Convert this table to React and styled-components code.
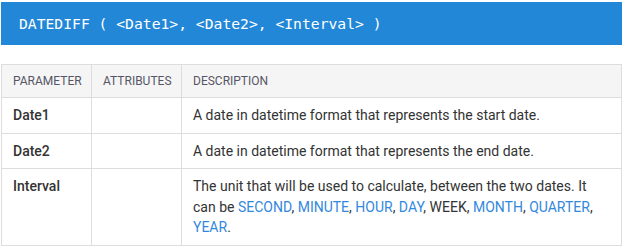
import React from "react"
import styled, { createGlobalStyle } from "styled-components"

const GlobalStyle = createGlobalStyle`
    body {
        margin: 0;
        background: #ffffff;
        font-family: Roboto, "Liberation Sans", sans-serif;
    }
`

const Page = styled.div`
    padding: 2px 3px 0 1px;
    width: 621px;
`

const Syntax = styled.div`
    height: 43px;
    display: flex;
    align-items: center;
    padding-left: 18px;
    background-color: #2387d8;
    color: #ffffff;
    font-family: "DejaVu Sans Mono", "Liberation Mono", monospace;
    font-size: 14.7px;
    white-space: pre;
`

const Table = styled.table`
    margin-top: 19px;
    width: 621px;
    border-collapse: collapse;
    table-layout: fixed;
    color: #333333;
`

const Col = styled.col`
    width: ${p => p.w || "auto"};
`

const HeadCell = styled.th`
    padding: 7px 11px;
    border: 1px solid #dddddd;
    background-color: #f5f5f5;
    color: #555566;
    font-size: 12px;
    font-weight: 400;
    line-height: 18px;
    text-align: left;
    text-transform: uppercase;
`

const Cell = styled.td`
    padding: 7px 11px;
    border: 1px solid #dddddd;
    font-size: 14px;
    line-height: 20.6px;
    vertical-align: top;
    font-weight: ${p => (p.name ? 500 : 400)};
`

const Unit = styled.span`
    color: ${p => (p.plain ? "#333333" : "#3388dd")};
`

const units = ["SECOND", "MINUTE", "HOUR", "DAY", "WEEK", "MONTH", "QUARTER", "YEAR"]

const rows = [
    { name: "Date1", desc: "A date in datetime format that represents the start date." },
    { name: "Date2", desc: "A date in datetime format that represents the end date." },
]

function App() {
    return (
        <Page>
            <GlobalStyle />
            <Syntax>{"DATEDIFF ( <Date1>, <Date2>, <Interval> )"}</Syntax>
            <Table>
                <colgroup>
                    <Col w="90px" />
                    <Col w="90px" />
                    <Col />
                </colgroup>
                <thead>
                    <tr>
                        <HeadCell>Parameter</HeadCell>
                        <HeadCell>Attributes</HeadCell>
                        <HeadCell>Description</HeadCell>
                    </tr>
                </thead>
                <tbody>
                    {rows.map(r => (
                        <tr key={r.name}>
                            <Cell name>{r.name}</Cell>
                            <Cell />
                            <Cell>{r.desc}</Cell>
                        </tr>
                    ))}
                    <tr>
                        <Cell name>Interval</Cell>
                        <Cell />
                        <Cell>
                            The unit that will be used to calculate, between the two dates. It can be{" "}
                            {units.map((u, i) => (
                                <React.Fragment key={u}>
                                    <Unit plain={u === "WEEK"}>{u}</Unit>
                                    {i < units.length - 1 ? ", " : "."}
                                </React.Fragment>
                            ))}
                        </Cell>
                    </tr>
                </tbody>
            </Table>
        </Page>
    )
}

export default App
